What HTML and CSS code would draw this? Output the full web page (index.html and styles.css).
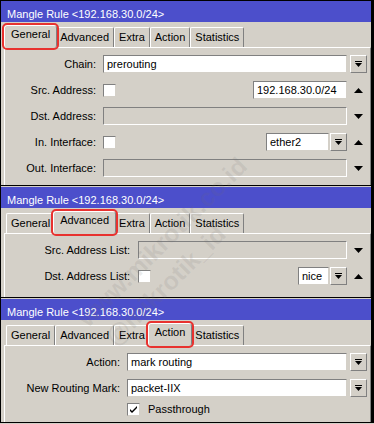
FILE: index.html
```html
<!DOCTYPE html>
<html lang="en">
<head>
  <meta charset="UTF-8" />
  <title>Mangle Rule</title>
  <link rel="stylesheet" href="styles.css">
</head>
<body>

  <!-- General tab -->
  <div class="win win-first">
    <div class="title">Mangle Rule &lt;192.168.30.0/24&gt;</div>
    <div class="tabs">
      <div class="tab active marked">General</div>
      <div class="tab">Advanced</div>
      <div class="tab">Extra</div>
      <div class="tab">Action</div>
      <div class="tab">Statistics</div>
    </div>
    <div class="sheet sheet-general">
      <div class="row">
        <span class="label">Chain:</span>
        <div class="field"><div class="input">prerouting</div></div>
        <div class="side"><span class="btn"><svg width="7" height="6" viewBox="0 0 7 6"><rect width="7" height="1"/><path d="M0 2h7L3.5 6z"/></svg></span></div>
      </div>
      <div class="row">
        <span class="label">Src. Address:</span>
        <div class="field">
          <span class="check"></span>
          <div class="input input-addr">192.168.30.0/24</div>
        </div>
        <div class="side"><svg width="9" height="5" viewBox="0 0 9 5"><path d="M0 5h9L4.5 0z"/></svg></div>
      </div>
      <div class="row">
        <span class="label">Dst. Address:</span>
        <div class="field"><div class="input off"></div></div>
        <div class="side"><svg width="9" height="5" viewBox="0 0 9 5"><path d="M0 0h9L4.5 5z"/></svg></div>
      </div>
      <div class="row">
        <span class="label">In. Interface:</span>
        <div class="field">
          <span class="check"></span>
          <div class="input input-iface">ether2</div>
          <span class="btn"><svg width="7" height="6" viewBox="0 0 7 6"><rect width="7" height="1"/><path d="M0 2h7L3.5 6z"/></svg></span>
        </div>
        <div class="side"><svg width="9" height="5" viewBox="0 0 9 5"><path d="M0 5h9L4.5 0z"/></svg></div>
      </div>
      <div class="row">
        <span class="label">Out. Interface:</span>
        <div class="field"><div class="input off"></div></div>
        <div class="side"><svg width="9" height="5" viewBox="0 0 9 5"><path d="M0 0h9L4.5 5z"/></svg></div>
      </div>
    </div>
  </div>

  <!-- Advanced tab -->
  <div class="win">
    <div class="title">Mangle Rule &lt;192.168.30.0/24&gt;</div>
    <div class="tabs">
      <div class="tab">General</div>
      <div class="tab active marked">Advanced</div>
      <div class="tab">Extra</div>
      <div class="tab">Action</div>
      <div class="tab">Statistics</div>
    </div>
    <div class="sheet sheet-advanced">
      <div class="row">
        <span class="label">Src. Address List:</span>
        <div class="field"><div class="input off"></div></div>
        <div class="side"><svg width="9" height="5" viewBox="0 0 9 5"><path d="M0 0h9L4.5 5z"/></svg></div>
      </div>
      <div class="row">
        <span class="label">Dst. Address List:</span>
        <div class="field">
          <span class="check"></span>
          <div class="input input-list">nice</div>
          <span class="btn"><svg width="7" height="6" viewBox="0 0 7 6"><rect width="7" height="1"/><path d="M0 2h7L3.5 6z"/></svg></span>
        </div>
        <div class="side"><svg width="9" height="5" viewBox="0 0 9 5"><path d="M0 5h9L4.5 0z"/></svg></div>
      </div>
    </div>
  </div>

  <!-- Action tab -->
  <div class="win">
    <div class="title">Mangle Rule &lt;192.168.30.0/24&gt;</div>
    <div class="tabs">
      <div class="tab">General</div>
      <div class="tab">Advanced</div>
      <div class="tab">Extra</div>
      <div class="tab active marked">Action</div>
      <div class="tab">Statistics</div>
    </div>
    <div class="sheet sheet-action">
      <div class="row">
        <span class="label">Action:</span>
        <div class="field"><div class="input">mark routing</div></div>
        <div class="side"><span class="btn"><svg width="7" height="6" viewBox="0 0 7 6"><rect width="7" height="1"/><path d="M0 2h7L3.5 6z"/></svg></span></div>
      </div>
      <div class="row">
        <span class="label">New Routing Mark:</span>
        <div class="field"><div class="input">packet-IIX</div></div>
        <div class="side"><span class="btn"><svg width="7" height="6" viewBox="0 0 7 6"><rect width="7" height="1"/><path d="M0 2h7L3.5 6z"/></svg></span></div>
      </div>
      <div class="row row-flag">
        <span class="label"></span>
        <div class="field">
          <span class="check"><svg width="9" height="9" viewBox="0 0 9 9"><path d="M1 4l2 2 5-5v2L3 8 1 6z"/></svg></span>
          <span class="flag-text">Passthrough</span>
        </div>
      </div>
    </div>
  </div>

  <div class="watermark">
    <span>www.mikrotik.co.id</span>
    <span class="watermark-handle">@mikrotik_id</span>
  </div>

</body>
</html>
```

FILE: styles.css
```css
body {
  margin: 0;
  width: 374px;
  height: 424px;
  overflow: hidden;
  position: relative;
  background: #d4d0c8;
  color: #000;
  font-family: "Liberation Sans", Tahoma, Arial, sans-serif;
  font-size: 11px;
}

.win {
  border: solid #000;
  border-width: 0 3px 1px 1px;
  padding-top: 1px;
  background: #d4d0c8;
}
.win-first {
  border-top-width: 1px;
  padding-top: 0;
}

.title {
  height: 21px;
  box-sizing: border-box;
  padding: 7px 0 0 6px;
  line-height: 13px;
  background: #4c4fcb;
  color: #fff;
  white-space: nowrap;
}

.tabs {
  display: flex;
  align-items: flex-end;
  height: 20px;
  margin: 5px 0 0 5px;
}
.tab {
  height: 20px;
  box-sizing: border-box;
  padding: 3px 4px 0;
  line-height: 13px;
  border: 1px solid;
  border-color: #fff #808080 transparent #fff;
  border-bottom: 0;
  border-radius: 2px 2px 0 0;
}
.tab.active {
  position: relative;
  z-index: 1;
  height: 23px;
  margin: 0 -2px -1px;
  padding: 2px 6px 0;
  background: #d4d0c8;
}
.tab.marked {
  outline: 2px solid #e8322f;
  outline-offset: 0;
  border-radius: 3px;
}

.sheet {
  display: flex;
  flex-direction: column;
  gap: 8px;
  margin-left: 3px;
  padding: 7px 3px 8px 0;
  border-top: 1px solid #fff;
  border-left: 1px solid #fff;
  border-right: 1px solid #808080;
}
.sheet-advanced { padding-bottom: 12px; }
.sheet-action { padding-bottom: 6px; }

.row {
  display: flex;
  align-items: center;
  height: 18px;
}
.row-flag {
  height: 14px;
  margin-top: -3px;
}

.label {
  flex-shrink: 0;
  width: 91px;
  margin-right: 7px;
  text-align: right;
  white-space: nowrap;
}
.sheet-advanced .label { width: 125px; margin-right: 8px; }
.sheet-action .label { width: 115px; }

.field {
  flex: 1;
  display: flex;
  align-items: center;
  gap: 1px;
  height: 18px;
}

.input {
  flex: 1;
  height: 18px;
  box-sizing: border-box;
  padding: 0 3px;
  line-height: 16px;
  background: #fff;
  border: 1px solid;
  border-color: #808080 #d4d0c8 #d4d0c8 #808080;
  white-space: nowrap;
  overflow: hidden;
}
.input.off {
  background: transparent;
  border-color: #808080 #fff #fff #808080;
}
.input-addr {
  flex: 0 0 94px;
  margin-left: auto;
}
.input-iface {
  flex: 0 0 63px;
  margin-left: auto;
}
.input-list {
  flex: 0 0 31px;
  margin-left: auto;
}

.side {
  flex-shrink: 0;
  width: 18px;
  margin-left: 2px;
  display: flex;
  align-items: center;
  justify-content: center;
}

.btn {
  flex-shrink: 0;
  width: 17px;
  height: 18px;
  box-sizing: border-box;
  display: flex;
  align-items: center;
  justify-content: center;
  border: 1px solid;
  border-color: #fff #808080 #808080 #fff;
}

.check {
  flex-shrink: 0;
  width: 13px;
  height: 13px;
  box-sizing: border-box;
  display: flex;
  align-items: center;
  justify-content: center;
  background: #fff;
  border: 1px solid;
  border-color: #808080 #d4d0c8 #d4d0c8 #808080;
}

.flag-text {
  margin-left: 7px;
}

.watermark {
  position: absolute;
  left: 72px;
  top: 312px;
  display: flex;
  flex-direction: column;
  gap: 4px;
  transform: rotate(-45deg);
  transform-origin: left top;
  color: rgba(110, 110, 110, 0.13);
  font-size: 25px;
  font-weight: bold;
  white-space: nowrap;
  pointer-events: none;
}
.watermark-handle {
  margin-left: 6px;
}
```
